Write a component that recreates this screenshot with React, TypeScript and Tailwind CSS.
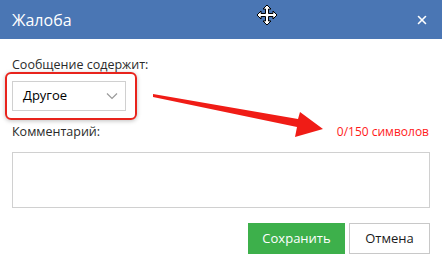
import { X } from "lucide-react";

function MoveCursor() {
  return (
    <svg width="22" height="22" viewBox="0 0 22 22" className="block">
      <path
        d="M11 1 L15 5 L12.5 5 L12.5 9.5 L17 9.5 L17 7 L21 11 L17 15 L17 12.5 L12.5 12.5 L12.5 17 L15 17 L11 21 L7 17 L9.5 17 L9.5 12.5 L5 12.5 L5 15 L1 11 L5 7 L5 9.5 L9.5 9.5 L9.5 5 L7 5 Z"
        fill="#fff"
        stroke="#000"
        strokeWidth="1"
        strokeLinejoin="miter"
      />
    </svg>
  );
}

function Chevron() {
  return (
    <svg width="12" height="8" viewBox="0 0 12 8" fill="none">
      <path d="M1 1.5 L6 6.5 L11 1.5" stroke="#9a9a9a" strokeWidth="1.2" />
    </svg>
  );
}

export default function App() {
  return (
    <div
      className="relative w-[442px] h-[264px] bg-white overflow-hidden"
      style={{ fontFamily: '"Open Sans", "Noto Sans", sans-serif' }}
    >
      <div className="h-[39px] bg-[#4a76b4] flex items-center justify-between pl-3 pr-[13px] text-white">
        <span className="text-[16px] leading-none">Жалоба</span>
        <X className="size-[14px]" strokeWidth={2.75} />
      </div>

      <div className="absolute left-[256px] top-[4px]">
        <MoveCursor />
      </div>

      <div className="px-3 pt-[17px]">
        <div className="text-[12.5px] leading-[18px] text-[#2a2a2a]">Сообщение содержит:</div>

        <div className="relative mt-[7px] w-[114px]">
          <div className="absolute -left-[7px] -right-[11px] -top-[9px] -bottom-[9px] rounded-[6px] border-2 border-[#e8231c] shadow-[0_1px_4px_rgba(0,0,0,0.25)]" />
          <div className="h-[30px] border border-[#d0d0d0] bg-white flex items-center justify-between pl-[10px] pr-[7px] text-[13px] text-black">
            <span>Другое</span>
            <Chevron />
          </div>
        </div>

        <div className="mt-[12px] flex items-center justify-between leading-[18px]">
          <span className="text-[12.5px] text-[#2a2a2a]">Комментарий:</span>
          <span className="text-[12px] text-[#ff1a1a] pr-[1px]">0/150 символов</span>
        </div>

        <div className="mt-[11px] h-[56px] border border-[#d0d0d0]" />

        <div className="mt-[15px] flex justify-end gap-[4px]">
          <button className="w-[97px] h-[31px] bg-[#3db04b] text-white text-[13px]">Сохранить</button>
          <button className="w-[81px] h-[31px] border border-[#c8c8c8] bg-white text-[#1a1a1a] text-[13px]">Отмена</button>
        </div>
      </div>

      <svg className="absolute left-0 top-0 pointer-events-none" width="442" height="264">
        <polygon
          points="153,94 298,119 300,112 323,129 295,137 297,127 153,97"
          fill="#f01c16"
        />
      </svg>
    </div>
  );
}
